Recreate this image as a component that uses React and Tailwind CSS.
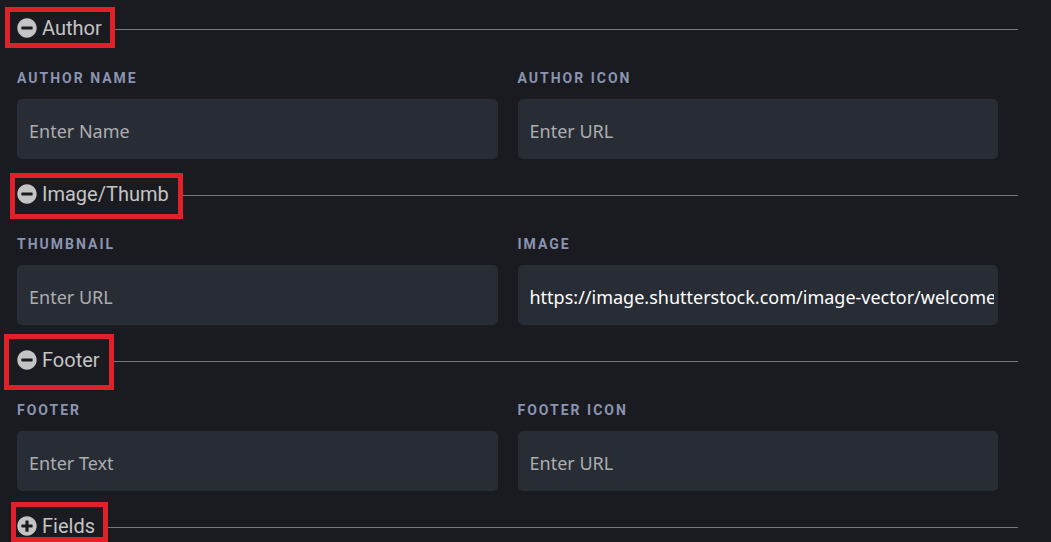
import React, { useState } from 'react';
import { FaMinusCircle, FaPlusCircle } from 'react-icons/fa';

const SECTIONS = [
    {
        id: 'author',
        title: 'Author',
        open: true,
        highlight: '-left-3 -top-[7px] -right-[13px] h-[41px]',
        fields: [
            { id: 'author-name', label: 'Author Name', placeholder: 'Enter Name' },
            { id: 'author-icon', label: 'Author Icon', placeholder: 'Enter URL' },
        ],
    },
    {
        id: 'image',
        title: 'Image/Thumb',
        open: true,
        highlight: '-left-[7px] -top-[7px] -right-[14px] h-[46px]',
        fields: [
            { id: 'thumbnail', label: 'Thumbnail', placeholder: 'Enter URL' },
            {
                id: 'image-url',
                label: 'Image',
                placeholder: 'Enter URL',
                value: 'https://image.shutterstock.com/image-vector/welcome-poster-spectrum-brush-strokes-260nw-1146069941.jpg',
            },
        ],
    },
    {
        id: 'footer',
        title: 'Footer',
        open: true,
        highlight: '-left-[13px] -top-3 -right-[14px] h-14',
        fields: [
            { id: 'footer-text', label: 'Footer', placeholder: 'Enter Text' },
            { id: 'footer-icon', label: 'Footer Icon', placeholder: 'Enter URL' },
        ],
    },
    {
        id: 'fields',
        title: 'Fields',
        open: false,
        highlight: '-left-[6px] -top-[10px] -right-[13px] h-10',
        fields: [],
    },
];

const Field = ({ field }) => (
    <div className="min-w-0">
        <label
            htmlFor={field.id}
            className="block text-sm leading-5 font-bold uppercase tracking-[2px] text-[#8a94b0] font-['Roboto',sans-serif]"
        >
            {field.label}
        </label>
        <input
            id={field.id}
            type="text"
            placeholder={field.placeholder}
            defaultValue={field.value}
            className="mt-[11px] block w-full h-[60px] pt-1 pl-3 pr-1 rounded-[5px] bg-[#282c34] text-lg text-white placeholder:text-[#adaeb1] outline-none font-['Noto_Sans',sans-serif]"
        />
    </div>
);

const Section = ({ section }) => {
    const [open, setOpen] = useState(section.open);
    const Icon = open ? FaMinusCircle : FaPlusCircle;

    return (
        <section>
            <div className="flex items-center gap-3 h-7">
                <h2 className="relative shrink-0">
                    <button
                        type="button"
                        aria-expanded={open}
                        onClick={() => setOpen(!open)}
                        className="flex items-center gap-[5px] pb-0.5 text-xl leading-7 text-[#c4c4c4] cursor-pointer font-['Roboto',sans-serif]"
                    >
                        <Icon size={20} />
                        {section.title}
                    </button>
                    {/* Red outline drawn over the heading */}
                    <span className={`absolute border-[5px] border-[#e1202a] pointer-events-none ${section.highlight}`} />
                </h2>
                <hr className="grow border-t border-[#77787b]" />
            </div>
            {open && section.fields.length > 0 && (
                <div className="grid grid-cols-2 gap-5 mt-[25px] pr-5">
                    {section.fields.map((field) => (
                        <Field key={field.id} field={field} />
                    ))}
                </div>
            )}
        </section>
    );
};

const App = () => (
    <main className="min-h-screen flex flex-col gap-[22px] pt-[15px] pl-[17px] pr-[33px] bg-[#1a1b20]">
        {SECTIONS.map((section) => (
            <Section key={section.id} section={section} />
        ))}
    </main>
);

export default App;
